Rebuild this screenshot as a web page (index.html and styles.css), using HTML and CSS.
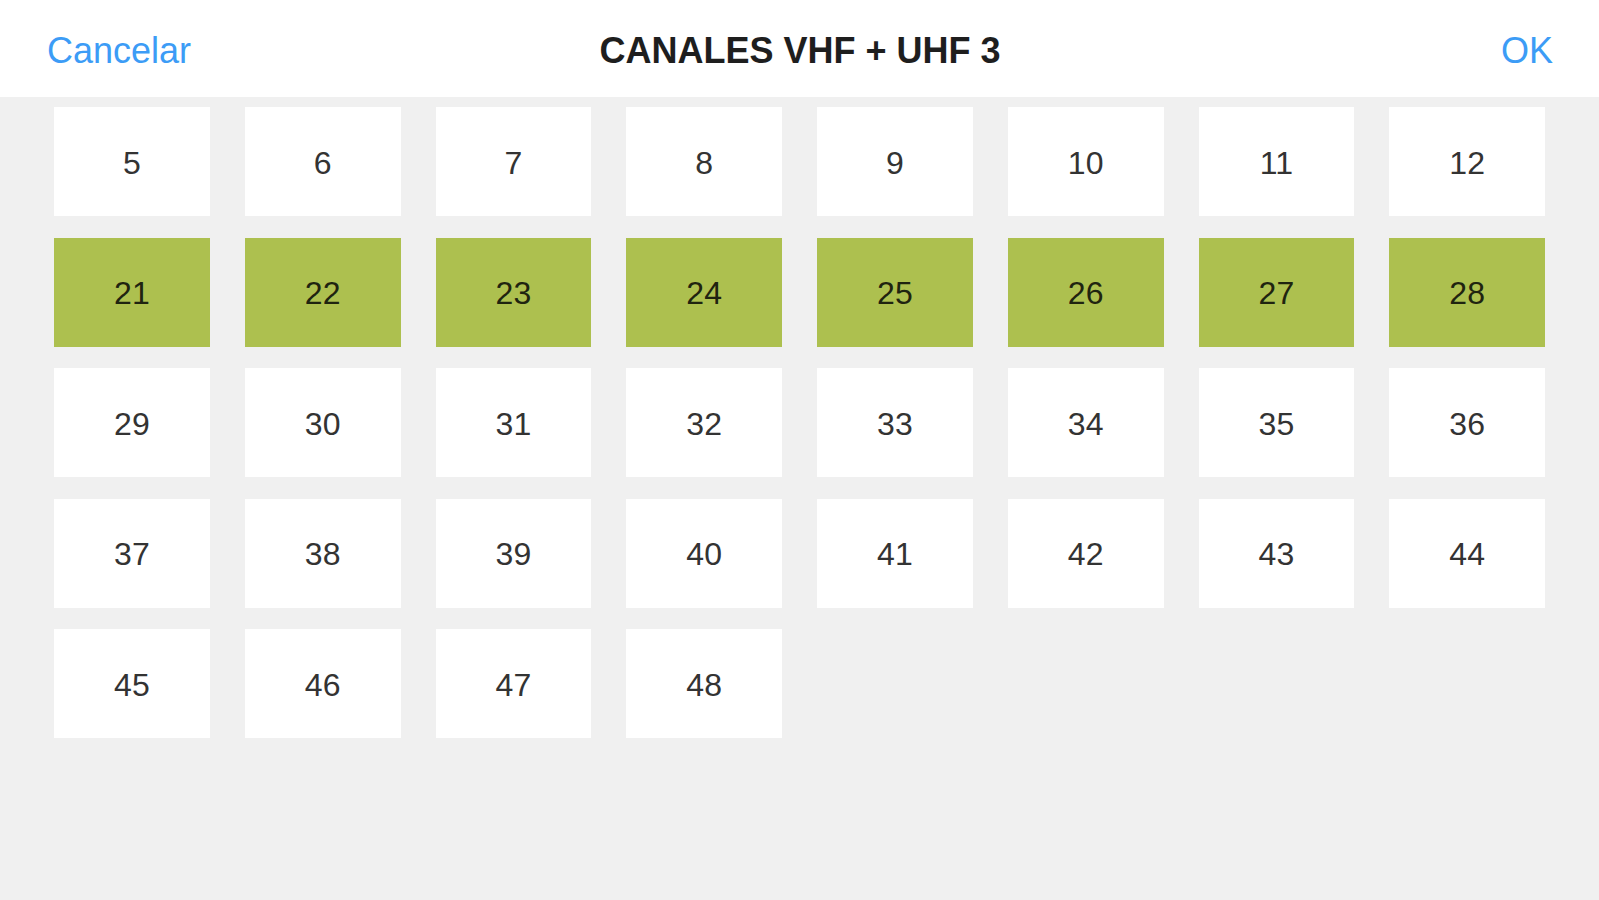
FILE: index.html
```html
<!DOCTYPE html>
<html lang="es">
<head>
<meta charset="utf-8">
<title>Canales VHF + UHF 3</title>
<link rel="stylesheet" href="styles.css">
</head>
<body>
<div class="screen">
  <header class="navbar">
    <span class="nav-btn">Cancelar</span>
    <h1 class="nav-title">CANALES VHF + UHF 3</h1>
    <span class="nav-btn nav-right">OK</span>
  </header>
  <main class="grid">
    <div class="cell">5</div>
    <div class="cell">6</div>
    <div class="cell">7</div>
    <div class="cell">8</div>
    <div class="cell">9</div>
    <div class="cell">10</div>
    <div class="cell">11</div>
    <div class="cell">12</div>
    <div class="cell on">21</div>
    <div class="cell on">22</div>
    <div class="cell on">23</div>
    <div class="cell on">24</div>
    <div class="cell on">25</div>
    <div class="cell on">26</div>
    <div class="cell on">27</div>
    <div class="cell on">28</div>
    <div class="cell">29</div>
    <div class="cell">30</div>
    <div class="cell">31</div>
    <div class="cell">32</div>
    <div class="cell">33</div>
    <div class="cell">34</div>
    <div class="cell">35</div>
    <div class="cell">36</div>
    <div class="cell">37</div>
    <div class="cell">38</div>
    <div class="cell">39</div>
    <div class="cell">40</div>
    <div class="cell">41</div>
    <div class="cell">42</div>
    <div class="cell">43</div>
    <div class="cell">44</div>
    <div class="cell">45</div>
    <div class="cell">46</div>
    <div class="cell">47</div>
    <div class="cell">48</div>
  </main>
</div>
</body>
</html>
```
FILE: styles.css
```css
html, body {
  margin: 0;
  padding: 0;
  height: 100%;
}
body {
  background: #f0f0f0;
  font-family: "Liberation Sans", Arial, sans-serif;
}
.screen {
  display: flex;
  flex-direction: column;
  height: 100%;
}
.navbar {
  height: 97px;
  background: #ffffff;
  display: flex;
  align-items: center;
  justify-content: space-between;
  padding: 4px 46px 0 47px;
  box-sizing: border-box;
  flex: none;
}
.nav-btn {
  font-size: 36px;
  color: #3c9cf6;
  line-height: 1;
  width: 200px;
}
.nav-right {
  text-align: right;
}
.nav-title {
  margin: 0;
  font-size: 36px;
  font-weight: 700;
  color: #1e1e1e;
  line-height: 1;
}
.grid {
  display: grid;
  grid-template-columns: repeat(8, 1fr);
  grid-auto-rows: 109px;
  column-gap: 35px;
  row-gap: 21.5px;
  padding: 10px 54px 0 54px;
}
.cell {
  background: #ffffff;
  display: flex;
  align-items: center;
  justify-content: center;
  padding-top: 3px;
  box-sizing: border-box;
  font-size: 32px;
  color: #333333;
}
.cell.on {
  background: #adc04f;
  color: #1f2410;
}
```
